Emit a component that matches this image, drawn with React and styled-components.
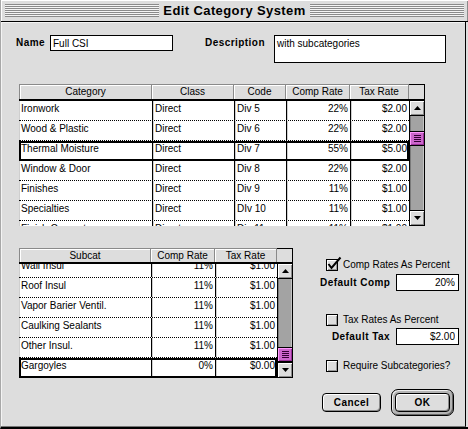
import React from "react";
import styled, { createGlobalStyle } from "styled-components";

const GlobalStyle = createGlobalStyle`
  html, body {
    margin: 0;
    padding: 0;
    background: #dddddd;
  }
  body {
    font-family: "Liberation Sans", Arial, sans-serif;
    font-size: 10px;
    color: #000;
  }
  * {
    box-sizing: border-box;
  }
`;

const categoryColumns = [
  { label: "Category", width: 133 },
  { label: "Class", width: 82 },
  { label: "Code", width: 52 },
  { label: "Comp Rate", width: 64, align: "right" },
  { label: "Tax Rate", width: 59, align: "right" },
];

const categoryRows = [
  ["Ironwork", "Direct", "Div 5", "22%", "$2.00"],
  ["Wood & Plastic", "Direct", "Div 6", "22%", "$2.00"],
  ["Thermal Moisture", "Direct", "Div 7", "55%", "$5.00"],
  ["Window & Door", "Direct", "Div 8", "22%", "$2.00"],
  ["Finishes", "Direct", "Div 9", "11%", "$1.00"],
  ["Specialties", "Direct", "DIv 10", "11%", "$1.00"],
  ["Finish Carpentry", "Direct", "Div 11", "11%", "$1.00"],
];

const subcatColumns = [
  { label: "Subcat", width: 132 },
  { label: "Comp Rate", width: 64, align: "right" },
  { label: "Tax Rate", width: 62, align: "right" },
];

const subcatRows = [
  ["Wall Insul", "11%", "$1.00"],
  ["Roof Insul", "11%", "$1.00"],
  ["Vapor Barier Ventil.", "11%", "$1.00"],
  ["Caulking Sealants", "11%", "$1.00"],
  ["Other Insul.", "11%", "$1.00"],
  ["Gargoyles", "0%", "$0.00"],
];

const Arrow = ({ up }) => (
  <svg width="7" height="4" viewBox="0 0 7 4">
    <polygon points={up ? "0,4 7,4 3.5,0" : "0,0 7,0 3.5,4"} fill="#000" />
  </svg>
);

const Scrollbar = ({ thumbTop }) => (
  <ScrollFrame>
    <ArrowButton $dir="up">
      <Arrow up />
    </ArrowButton>
    <Track>
      <Thumb $top={thumbTop}>
        <Grip />
      </Thumb>
    </Track>
    <ArrowButton $dir="down">
      <Arrow />
    </ArrowButton>
  </ScrollFrame>
);

const DataTable = ({
  columns,
  rows,
  selected,
  offset,
  headerHeight,
  bodyHeight,
  thumbTop,
}) => {
  const bodyWidth = columns.reduce((sum, c) => sum + c.width, 0);
  const template = columns.map((c) => `${c.width}px`).join(" ");

  return (
    <TableFrame
      $bodyWidth={bodyWidth}
      $headerHeight={headerHeight}
      $bodyHeight={bodyHeight}
    >
      <HeaderRow $template={template}>
        {columns.map((c, i) => (
          <HeaderCell key={c.label} $first={i === 0}>
            {c.label}
          </HeaderCell>
        ))}
      </HeaderRow>
      <HeaderCorner />
      <TableBody>
        <RowStack $offset={offset}>
          {rows.map((row, r) => (
            <Row key={r} $template={template} $selected={r === selected}>
              {row.map((value, i) => (
                <Cell key={i} $first={i === 0} $align={columns[i].align}>
                  {value}
                </Cell>
              ))}
            </Row>
          ))}
        </RowStack>
      </TableBody>
      <Scrollbar thumbTop={thumbTop} />
    </TableFrame>
  );
};

const Checkbox = ({ checked, label }) => (
  <CheckRow>
    <Box>
      {checked && (
        <CheckMark width="16" height="16" viewBox="0 0 16 16">
          <polyline
            points="2.5,8 5.5,12 14.5,1.5"
            fill="none"
            stroke="#000"
            strokeWidth="2"
          />
        </CheckMark>
      )}
    </Box>
    <span>{label}</span>
  </CheckRow>
);

export default function App() {
  return (
    <>
      <GlobalStyle />
      <Window>
        <TitleBar>
          <Stripes />
          <Title>Edit Category System</Title>
          <Stripes />
        </TitleBar>

        <DialogBody>
          <FieldRow>
            <Label $width={34}>Name</Label>
            <TextField $width={123} readOnly value="Full CSI" />
            <Label $width={69} $gap={32}>
              Description
            </Label>
            <TextArea readOnly value="with subcategories" />
          </FieldRow>

          <CategoryWrap>
            <DataTable
              columns={categoryColumns}
              rows={categoryRows}
              selected={2}
              offset={0}
              headerHeight={15}
              bodyHeight={127}
              thumbTop={15}
            />
          </CategoryWrap>

          <LowerSection>
            <DataTable
              columns={subcatColumns}
              rows={subcatRows}
              selected={5}
              offset={-6}
              headerHeight={14}
              bodyHeight={116}
              thumbTop={68}
            />

            <Options>
              <Checkbox checked label="Comp Rates As Percent" />
              <OptionField $top={3}>
                <OptionLabel>Default Comp</OptionLabel>
                <SmallField readOnly value="20%" />
              </OptionField>

              <Spacer $h={23} />
              <Checkbox label="Tax Rates As Percent" />
              <OptionField $top={2}>
                <OptionLabel>Default Tax</OptionLabel>
                <SmallField readOnly value="$2.00" />
              </OptionField>

              <Spacer $h={15} />
              <Checkbox label="Require Subcategories?" />
            </Options>
          </LowerSection>

          <ButtonRow>
            <Button>Cancel</Button>
            <DefaultRing>
              <Button $wide>OK</Button>
            </DefaultRing>
          </ButtonRow>
        </DialogBody>
      </Window>
    </>
  );
}

const Window = styled.div`
  width: 468px;
  height: 429px;
  display: flex;
  flex-direction: column;
  background: #dddddd;
  border-left: 1px solid #a8a8a8;
  border-bottom: 2px solid #000;
`;

const TitleBar = styled.div`
  height: 22px;
  flex: none;
  display: flex;
  align-items: center;
  gap: 2px;
  padding: 0 4px 1px 4px;
  border-bottom: 1px solid #000;
  background: #dddddd;
  box-shadow: inset 1px 1px 0 #fff, inset -1px 0 0 #8a8a8a;
`;

const Stripes = styled.div`
  flex: 1;
  height: 13px;
  background: repeating-linear-gradient(
    to bottom,
    #8a8a8a 0 1px,
    #f4f4f4 1px 2px
  );
`;

const Title = styled.div`
  padding: 0 2px;
  font-weight: bold;
  font-size: 13px;
  letter-spacing: 0.4px;
  line-height: 15px;
`;

const DialogBody = styled.div`
  flex: 1;
  display: flex;
  flex-direction: column;
  padding: 13px 11px 0 15px;
  margin-right: 2px;
  border-right: 1px solid #000;
  border-bottom: 1px solid #777;
  box-shadow: inset 1px 1px 0 #f4f4f4;
`;

const FieldRow = styled.div`
  display: flex;
  align-items: flex-start;
  height: 28px;
`;

const Label = styled.div`
  width: ${(p) => p.$width}px;
  margin-left: ${(p) => p.$gap || 0}px;
  font-weight: bold;
  letter-spacing: 0.45px;
  line-height: 16px;
  white-space: nowrap;
`;

const TextField = styled.input`
  width: ${(p) => p.$width}px;
  height: 16px;
  margin: 0;
  padding: 0 2px;
  border: 1px solid #000;
  border-radius: 0;
  background: #fff;
  font: inherit;
  line-height: 14px;
  outline: none;
`;

const TextArea = styled.textarea`
  width: 172px;
  height: 28px;
  margin: 0;
  padding: 1px 2px;
  border: 1px solid #000;
  border-radius: 0;
  background: #fff;
  font: inherit;
  line-height: 14px;
  resize: none;
  overflow: hidden;
  outline: none;
`;

const CategoryWrap = styled.div`
  margin: 21px 0 0 3px;
`;

const TableFrame = styled.div`
  display: grid;
  grid-template-columns: ${(p) => p.$bodyWidth}px 16px;
  grid-template-rows: ${(p) => p.$headerHeight}px ${(p) => p.$bodyHeight}px;
  width: fit-content;
`;

const HeaderRow = styled.div`
  display: grid;
  grid-template-columns: ${(p) => p.$template};
`;

const HeaderCell = styled.div`
  background: #dddddd;
  border-top: 1px solid #8a8a8a;
  border-right: 1px solid #8a8a8a;
  border-left: ${(p) => (p.$first ? "1px solid #8a8a8a" : "none")};
  box-shadow: inset 1px 1px 0 #fff;
  text-align: center;
  line-height: 13px;
  white-space: nowrap;
  overflow: hidden;
`;

const HeaderCorner = styled.div`
  border-top: 1px solid #000;
  border-right: 1px solid #000;
  background: #dddddd;
`;

const TableBody = styled.div`
  background: #fff;
  border-top: 2px solid #000;
  overflow: hidden;
`;

const RowStack = styled.div`
  margin-top: ${(p) => p.$offset}px;
`;

const Row = styled.div`
  display: grid;
  grid-template-columns: ${(p) => p.$template};
  height: 20px;
  border-bottom: 1px dotted #000;
  outline: ${(p) => (p.$selected ? "2px solid #000" : "none")};
  outline-offset: -2px;
`;

const Cell = styled.div`
  padding: 0 2px;
  text-align: ${(p) => p.$align || "left"};
  border-left: ${(p) => (p.$first ? "none" : "1px solid #000")};
  box-shadow: inset 1px 0 0 #cfcfcf;
  line-height: 15px;
  white-space: nowrap;
  overflow: hidden;
`;

const ScrollFrame = styled.div`
  display: flex;
  flex-direction: column;
  border: 1px solid #000;
  border-top-width: 2px;
  background: #a3a3a3;
`;

const ArrowButton = styled.div`
  height: 15px;
  flex: none;
  display: flex;
  align-items: center;
  justify-content: center;
  background: #dddddd;
  box-shadow: inset 1px 1px 0 #fff, inset -1px -1px 0 #8a8a8a;
  border-${(p) => (p.$dir === "up" ? "bottom" : "top")}: 1px solid #000;
`;

const Track = styled.div`
  flex: 1;
  position: relative;
  background: #a3a3a3;
  box-shadow: inset 1px 0 0 #7a7a7a, inset -1px 0 0 #c4c4c4;
`;

const Thumb = styled.div`
  position: absolute;
  left: 0;
  right: 0;
  top: ${(p) => p.$top}px;
  height: 15px;
  display: flex;
  align-items: center;
  justify-content: center;
  background: #cc66cc;
  border-top: 1px solid #000;
  border-bottom: 1px solid #000;
  box-shadow: inset 1px 1px 0 #ff99ff, inset -1px -1px 0 #993399;
`;

const Grip = styled.div`
  width: 7px;
  height: 7px;
  background: repeating-linear-gradient(
    to bottom,
    #330033 0 1px,
    transparent 1px 2px
  );
`;

const LowerSection = styled.div`
  display: flex;
  align-items: flex-start;
  margin: 22px 0 0 3px;
`;

const Options = styled.div`
  display: flex;
  flex-direction: column;
  margin-left: 27px;
  padding-top: 11px;
`;

const CheckRow = styled.div`
  display: flex;
  align-items: center;
  gap: 5px;
  height: 12px;
  padding-left: 6px;
  line-height: 12px;
  white-space: nowrap;
`;

const Box = styled.div`
  position: relative;
  width: 12px;
  height: 12px;
  flex: none;
  border: 1px solid #000;
  background: #dddddd;
  box-shadow: inset 1px 1px 0 #fff, inset -1px -1px 0 #999;
`;

const CheckMark = styled.svg`
  position: absolute;
  left: -1px;
  top: -4px;
`;

const OptionField = styled.div`
  display: flex;
  align-items: center;
  gap: 6px;
  margin-top: ${(p) => p.$top}px;
`;

const OptionLabel = styled.div`
  width: 70px;
  text-align: right;
  font-weight: bold;
  letter-spacing: 0.45px;
  white-space: nowrap;
`;

const SmallField = styled.input`
  width: 63px;
  height: 17px;
  margin: 0;
  padding: 0 3px;
  border: 1px solid #000;
  border-radius: 0;
  background: #fff;
  font: inherit;
  text-align: right;
  outline: none;
`;

const Spacer = styled.div`
  height: ${(p) => p.$h}px;
`;

const ButtonRow = styled.div`
  display: flex;
  justify-content: flex-end;
  align-items: center;
  gap: 10px;
  margin-top: 11px;
`;

const Button = styled.div`
  width: ${(p) => (p.$wide ? 55 : 59)}px;
  height: 19px;
  display: flex;
  align-items: center;
  justify-content: center;
  border: 1px solid #000;
  border-radius: 4px;
  background: #dddddd;
  box-shadow: inset 1px 1px 0 #fff, inset -1px -1px 0 #8a8a8a;
  font-weight: bold;
  letter-spacing: 0.45px;
`;

const DefaultRing = styled.div`
  width: 63px;
  height: 27px;
  display: flex;
  align-items: center;
  justify-content: center;
  border: 1px solid #000;
  border-radius: 7px;
  background: #b4b4b4;
  box-shadow: inset 1px 1px 0 #eee, inset -1px -1px 0 #666;
`;
